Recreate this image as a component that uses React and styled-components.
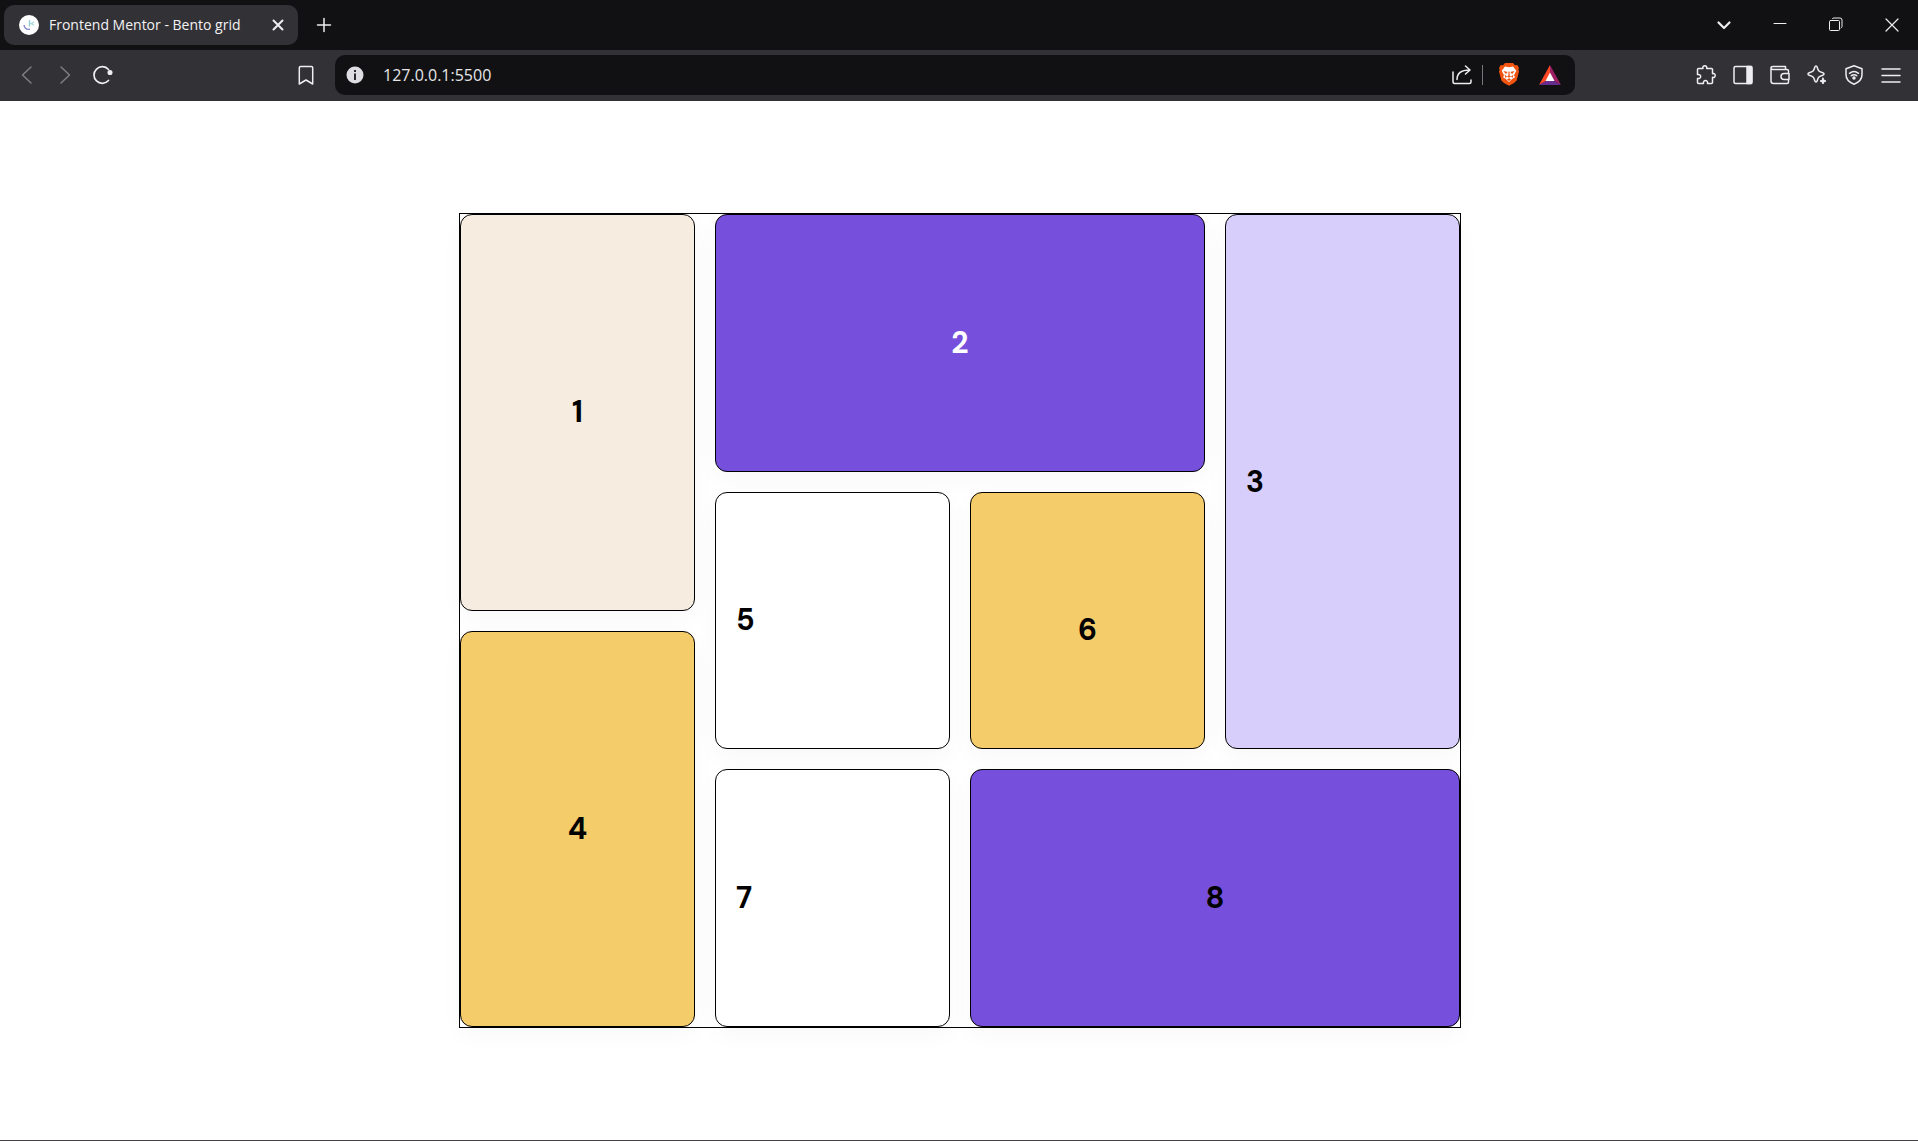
import React from "react";
import styled, { createGlobalStyle } from "styled-components";

const GlobalStyle = createGlobalStyle`
  *, *::before, *::after { box-sizing: border-box; }
  body { margin: 0; background: #fff; }
  button, input { font: inherit; color: inherit; }
`;

const Window = styled.div`
  display: flex;
  flex-direction: column;
  min-height: 100vh;
  border-bottom: 1px solid #454347;
  font-family: "Open Sans", "Noto Sans", sans-serif;
`;

const TabStrip = styled.header`
  display: flex;
  align-items: center;
  height: 50px;
  padding: 0 16px 0 4px;
  background: #111113;
  color: #f2f2f4;
`;

const Tab = styled.div`
  display: flex;
  align-items: center;
  width: 294px;
  height: 40px;
  padding: 0 10px 0 15px;
  gap: 10px;
  border-radius: 10px;
  background: #323136;
`;

const TabTitle = styled.span`
  flex: 1;
  font-size: 14px;
  line-height: 20px;
  white-space: nowrap;
`;

const IconButton = styled.button`
  display: flex;
  align-items: center;
  justify-content: center;
  flex: none;
  width: ${(p) => p.$width || 20}px;
  height: 32px;
  padding: 0;
  border: 0;
  background: none;
  color: ${(p) => (p.$dim ? "#807e84" : "#eeedf0")};
`;

const NewTab = styled(IconButton)`
  margin-left: 16px;
`;

const WindowControls = styled.div`
  display: flex;
  gap: 36px;
  margin-left: auto;
`;

const Toolbar = styled.nav`
  display: flex;
  align-items: center;
  height: 51px;
  padding: 0 16px 2px 8px;
  background: #323136;
`;

const Navigation = styled.div`
  display: flex;
  flex: 1;
`;

const BookmarkButton = styled(IconButton)`
  margin: 0 14px 0 auto;
`;

const AddressBar = styled.form`
  display: flex;
  align-items: center;
  flex: 0 1 1240px;
  height: 40px;
  padding: 0 14px 0 10px;
  border-radius: 10px;
  background: #111113;
`;

const AddressInput = styled.input`
  flex: 1;
  min-width: 0;
  padding: 0;
  margin-left: 18px;
  border: 0;
  outline: 0;
  background: none;
  color: #e6e6e9;
  font-size: 16px;
  line-height: 24px;
`;

const Divider = styled.span`
  width: 1px;
  height: 20px;
  margin: 0 16px 0 10px;
  background: #77767b;
`;

const RewardsButton = styled(IconButton)`
  margin-left: 20px;
`;

const Extensions = styled.div`
  display: flex;
  flex: 1;
  justify-content: flex-end;
  gap: 15px;
`;

const Page = styled.main`
  display: flex;
  flex: 1;
  justify-content: center;
  padding: 112px 0 112px 2px;
`;

const Bento = styled.div`
  display: grid;
  grid-template-columns: repeat(4, 1fr);
  grid-template-rows: repeat(6, 1fr);
  gap: 20px;
  width: 100%;
  max-width: 1002px;
  border: 1px solid #000;
  font-family: "DM Sans", Inter, sans-serif;
`;

const Card = styled.section`
  display: flex;
  align-items: center;
  justify-content: ${(p) => (p.$start ? "flex-start" : "center")};
  grid-area: ${(p) => p.$area};
  padding: ${(p) => (p.$low ? "40px 20px 20px" : "20px")};
  border: 1px solid #000;
  border-radius: 12px;
  background: ${(p) => p.$fill};
  color: ${(p) => (p.$light ? "#fff" : "#000")};
  box-shadow: 0 8px 24px rgba(0, 0, 0, 0.03);
`;

const CardNumber = styled.h2`
  margin: 0;
  font-size: 30px;
  font-weight: 700;
  line-height: 38px;
`;

const cards = [
  { n: 1, area: "1 / 1 / span 3 / span 1", fill: "#f7ece0" },
  { n: 2, area: "1 / 2 / span 2 / span 2", fill: "#7650dc", light: true },
  { n: 3, area: "1 / 4 / span 4 / span 1", fill: "#d8cefc", start: true },
  { n: 4, area: "4 / 1 / span 3 / span 1", fill: "#f5cc6a" },
  { n: 5, area: "3 / 2 / span 2 / span 1", fill: "#fff", start: true },
  { n: 6, area: "3 / 3 / span 2 / span 1", fill: "#f5cc6a", low: true },
  { n: 7, area: "5 / 2 / span 2 / span 1", fill: "#fff", start: true },
  { n: 8, area: "5 / 3 / span 2 / span 2", fill: "#7650dc" },
];

const Icon = ({ size = 20, stroke = 1.5, children }) => (
  <svg
    width={size}
    height={size}
    viewBox="0 0 20 20"
    fill="none"
    stroke="currentColor"
    strokeWidth={stroke}
    strokeLinecap="round"
    strokeLinejoin="round"
    aria-hidden="true"
  >
    {children}
  </svg>
);

const Favicon = () => (
  <svg width="20" height="20" viewBox="0 0 20 20" fill="none" aria-hidden="true">
    <circle cx="10" cy="10" r="10" fill="#fff" />
    <path d="M10.500 5v6.500" stroke="#8fcbd2" strokeWidth="1.3" />
    <path d="M15 7l-3 1.600 3 1.600" stroke="#a5d8da" strokeWidth="1.2" />
    <path d="M5 10c.5 3 3 4.700 6 4.300" stroke="#7f86cc" strokeWidth="1.4" />
  </svg>
);

const BraveLion = () => (
  <svg width="20" height="23" viewBox="0 0 20 23" aria-hidden="true">
    <path d="M6 0h8l2 2.200 2.300-.2L20 5l-.6 1.600.6 2-2.400 9-2.600 2.400L10 22.800l-5-2.800-2.600-2.400L0 8.600l.6-2L0 5l1.700-3L4 2.200z" fill="#f2540f" />
    <path d="M6 3.500l4 .8 4-.8 3.300 4.300-2.300 4.400 1 2-2.500 1.500L10 19l-3.500-3.300L4 14.200l1-2L2.700 7.800z" fill="#fff" />
    <path d="M4.500 8l3.500.7.500 1.300-2 .8zM15.500 8l-3.500.7-.5 1.300 2 .8zM9.400 8.500h1.200v4l1.400 1-2 1.200-2-1.200 1.400-1zM5.500 11.500l2.500 2-1.500 1.500zM14.500 11.500l-2.500 2 1.500 1.500zM10 15.300l2 1.200-2 1.400-2-1.400z" fill="#f2540f" />
  </svg>
);

const RewardsTriangle = () => (
  <svg width="22" height="20" viewBox="0 0 22 20" aria-hidden="true">
    <path d="M11 0L0 20l7-4 4-7z" fill="#ff4724" />
    <path d="M11 0l11 20-7-4-4-7z" fill="#9e1f63" />
    <path d="M0 20h22l-7-4H7z" fill="#662d91" />
    <path d="M11 7.500L6.500 16h9z" fill="#fff" />
  </svg>
);

export default function App() {
  return (
    <Window>
      <GlobalStyle />
      <TabStrip>
        <Tab>
          <Favicon />
          <TabTitle>Frontend Mentor - Bento grid</TabTitle>
          <IconButton aria-label="Close tab">
            <Icon stroke={2}><path d="M5.500 5.500l9 9M14.500 5.500l-9 9" /></Icon>
          </IconButton>
        </Tab>
        <NewTab aria-label="New tab">
          <Icon><path d="M10 3.500v13M3.500 10h13" /></Icon>
        </NewTab>
        <WindowControls>
          <IconButton aria-label="Search tabs">
            <Icon stroke={2.2}><path d="M4.500 7.500l5.500 5.500 5.500-5.500" /></Icon>
          </IconButton>
          <IconButton aria-label="Minimize">
            <Icon stroke={1}><path d="M4 8.500h12" /></Icon>
          </IconButton>
          <IconButton aria-label="Restore">
            <Icon stroke={1}>
              <rect x="3.500" y="5.500" width="10" height="10" rx="1" />
              <path d="M6.500 3.500q.5-.5 1.500-.5h6q2 0 2 2v6.500q0 1-1 1.500" />
            </Icon>
          </IconButton>
          <IconButton aria-label="Close window">
            <Icon stroke={1.2}><path d="M4 4l12 12M16 4L4 16" /></Icon>
          </IconButton>
        </WindowControls>
      </TabStrip>

      <Toolbar>
        <Navigation>
          <IconButton $dim $width={38} aria-label="Back">
            <Icon><path d="M14 2l-8.500 8 8.500 8" /></Icon>
          </IconButton>
          <IconButton $dim $width={38} aria-label="Forward">
            <Icon><path d="M6 2l8.500 8-8.500 8" /></Icon>
          </IconButton>
          <IconButton $width={38} aria-label="Reload">
            <Icon stroke={1.7}>
              <path d="M15.500 15.500A8.300 8.300 0 1 1 15.500 4.500" />
              <circle cx="17" cy="7.500" r="1.700" fill="currentColor" />
            </Icon>
          </IconButton>
          <BookmarkButton $width={30} aria-label="Bookmark this page">
            <Icon><path d="M4.500 1.500h11q1.200 0 1.200 1.200V19l-6.700-4L3.300 19V2.700q0-1.200 1.200-1.200z" /></Icon>
          </BookmarkButton>
        </Navigation>
        <AddressBar>
          <IconButton type="button" aria-label="Site information">
            <svg width="18" height="18" viewBox="0 0 18 18" aria-hidden="true">
              <circle cx="9" cy="9" r="8.500" fill="#dedde4" />
              <path d="M8 4h2v2H8zM8 7.500h2V14H8z" fill="#29282d" />
            </svg>
          </IconButton>
          <AddressInput aria-label="Address" defaultValue="127.0.0.1:5500" />
          <IconButton type="button" aria-label="Share">
            <Icon>
              <path d="M1 7v10q0 1.500 1.500 1.500h15Q19 18.500 19 17v-2M5 14.500q0-9.500 12.500-9.500M13.500 1l4.500 4-4.500 4" />
            </Icon>
          </IconButton>
          <Divider />
          <IconButton type="button" aria-label="Brave Shields"><BraveLion /></IconButton>
          <RewardsButton type="button" $width={22} aria-label="Brave Rewards"><RewardsTriangle /></RewardsButton>
        </AddressBar>
        <Extensions>
          <IconButton $width={22} aria-label="Extensions">
            <Icon>
              <path d="M2.500 3.500H7C6.300 1.700 7.500.800 8.800.800s2.500.900 1.800 2.700h4.900q1 0 1 1v4.300c1.800-.7 2.700.4 2.700 1.700s-.9 2.500-2.700 1.800V17.500q0 1-1 1H11.500c.4-1.800-.5-3-2-3s-2.400 1.200-2 3h-5q-1 0-1-1v-4c1.900.4 3.200-.5 3.200-2S3.400 9.100 1.500 9.500v-5q0-1 1-1z" />
            </Icon>
          </IconButton>
          <IconButton $width={22} aria-label="Sidebar">
            <Icon>
              <rect x="1" y="1.500" width="18" height="17" rx="1.500" />
              <path d="M14 1.500h4.500v17H14z" fill="currentColor" />
            </Icon>
          </IconButton>
          <IconButton $width={22} aria-label="Wallet">
            <Icon>
              <path d="M18.500 8V6q0-1.500-1.500-1.500H3Q1 4.500 1 3t2-1.500h12.500v3M1 3v13q0 2.500 2.500 2.500H17q1.500 0 1.500-1.500v-2M19 8.500h-5a3 3 0 0 0 0 6H19z" />
            </Icon>
          </IconButton>
          <IconButton $width={22} aria-label="Leo AI">
            <Icon>
              <path d="M9 1c.7 0 1 .5 1.200 1.200 1 3.800 1.800 4.600 5.600 5.600 1.600.4 1.600 2 0 2.400-3.800 1-4.600 1.800-5.600 5.600-.4 1.600-2 1.600-2.400 0-1-3.800-1.800-4.600-5.600-5.600-1.600-.4-1.600-2 0-2.400 3.800-1 4.600-1.800 5.600-5.600Q8.200 1 9 1z" />
              <path d="M16 13l.9 2.100 2.100.9-2.100.9L16 19l-.9-2.100L13 16l2.100-.9z" fill="currentColor" strokeWidth="1" />
            </Icon>
          </IconButton>
          <IconButton $width={22} aria-label="VPN">
            <Icon>
              <path d="M10 .8l8 3v6c0 4.500-3.500 7.700-8 9.400-4.500-1.700-8-4.900-8-9.400v-6z" />
              <path d="M5.500 8.300q4.500-3.500 9 0M7.300 10.700q2.700-2 5.400 0" />
              <circle cx="10" cy="13" r="1" fill="currentColor" />
            </Icon>
          </IconButton>
          <IconButton $width={22} aria-label="Menu">
            <Icon><path d="M1 4h18M1 10.500h18M1 17h18" /></Icon>
          </IconButton>
        </Extensions>
      </Toolbar>

      <Page>
        <Bento>
          {cards.map((c) => (
            <Card key={c.n} $area={c.area} $fill={c.fill} $start={c.start} $low={c.low} $light={c.light}>
              <CardNumber>{c.n}</CardNumber>
            </Card>
          ))}
        </Bento>
      </Page>
    </Window>
  );
}
